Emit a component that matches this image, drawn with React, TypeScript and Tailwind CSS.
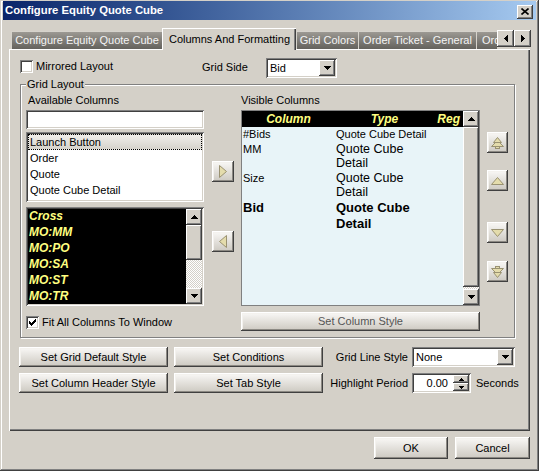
import React from "react";

const raised =
  "shadow-[inset_-1px_-1px_#404040,inset_1px_1px_#ffffff,inset_-2px_-2px_#808080,inset_2px_2px_#d4d0c8]";
const sunken =
  "shadow-[inset_1px_1px_#808080,inset_-1px_-1px_#ffffff,inset_2px_2px_#404040,inset_-2px_-2px_#d4d0c8]";
const btn =
  "bg-linear-to-b from-[#fbfaf8] to-[#cbc7bf] shadow-[inset_-1px_-1px_#404040,inset_1px_1px_#ffffff,inset_-2px_-2px_#8c8983,inset_2px_2px_#f4f2ee]";

function Btn({ className = "", children }: { className?: string; children?: React.ReactNode }) {
  return <div className={`${btn} flex items-center justify-center shrink-0 ${className}`}>{children}</div>;
}

function Tri({ dir }: { dir: "up" | "down" | "left" | "right" }) {
  if (dir === "up")
    return (
      <svg width="7" height="4" shapeRendering="crispEdges">
        <path d="M3 0h1v1h1v1h1v1h1v1H0V3h1V2h1V1h1z" fill="#000" />
      </svg>
    );
  if (dir === "down")
    return (
      <svg width="7" height="4" shapeRendering="crispEdges">
        <path d="M0 0h7v1H6v1H5v1H4v1H3V3H2V2H1V1H0z" fill="#000" />
      </svg>
    );
  if (dir === "left")
    return (
      <svg width="4" height="7" shapeRendering="crispEdges">
        <path d="M3 0h1v7H3V6H2V5H1V4H0V3h1V2h1V1h1z" fill="#000" />
      </svg>
    );
  return (
    <svg width="4" height="7" shapeRendering="crispEdges">
      <path d="M0 0h1v1h1v1h1v1h1v1H3v1H2v1H1v1H0z" fill="#000" />
    </svg>
  );
}

function ScrollBtn({ dir }: { dir: "up" | "down" }) {
  return (
    <div className={`w-[16px] h-[16px] shrink-0 bg-[#d4d0c8] ${raised} flex items-center justify-center`}>
      <Tri dir={dir} />
    </div>
  );
}

function Khaki({ kind }: { kind: "right" | "left" | "up" | "down" | "up2" | "down2" }) {
  const f = "#e4dcac";
  const s = "#9a9272";
  if (kind === "right")
    return (
      <svg width="8" height="13">
        <path d="M0.5 0.5L7.5 6.5L0.5 12.5Z" fill={f} stroke={s} />
      </svg>
    );
  if (kind === "left")
    return (
      <svg width="8" height="13">
        <path d="M7.5 0.5L0.5 6.5L7.5 12.5Z" fill={f} stroke={s} />
      </svg>
    );
  if (kind === "up")
    return (
      <svg width="13" height="8">
        <path d="M0.5 7.5L6.5 0.5L12.5 7.5Z" fill={f} stroke={s} />
      </svg>
    );
  if (kind === "down")
    return (
      <svg width="13" height="8">
        <path d="M0.5 0.5L6.5 7.5L12.5 0.5Z" fill={f} stroke={s} />
      </svg>
    );
  if (kind === "up2")
    return (
      <svg width="13" height="12">
        <rect x="4.5" y="8.5" width="4" height="3" fill={f} stroke={s} />
        <path d="M0.5 9.5L6.5 3.5L12.5 9.5Z" fill={f} stroke={s} />
        <path d="M2.5 5.5L6.5 0.5L10.5 5.5Z" fill={f} stroke={s} />
      </svg>
    );
  return (
    <svg width="13" height="12">
      <rect x="4.5" y="0.5" width="4" height="3" fill={f} stroke={s} />
      <path d="M0.5 2.5L6.5 8.5L12.5 2.5Z" fill={f} stroke={s} />
      <path d="M2.5 6.5L6.5 11.5L10.5 6.5Z" fill={f} stroke={s} />
    </svg>
  );
}

function Check({ checked = false }: { checked?: boolean }) {
  return (
    <div className={`w-[13px] h-[13px] shrink-0 bg-white ${sunken} flex items-center justify-center`}>
      {checked && (
        <svg width="7" height="7" shapeRendering="crispEdges">
          <path d="M6 0h1v3H6v1H5v1H4v1H3v1H2V6H1V5H0V2h1v1h1v1h1V3h1V2h1V1h1z" fill="#000" />
        </svg>
      )}
    </div>
  );
}

function Dropdown({ className = "", value }: { className?: string; value: string }) {
  return (
    <div className={`bg-white ${sunken} flex items-center p-[2px] shrink-0 ${className}`}>
      <span className="flex-1 pl-[2px]">{value}</span>
      <div className={`w-[16px] h-[16px] bg-[#d4d0c8] ${raised} flex items-center justify-center`}>
        <Tri dir="down" />
      </div>
    </div>
  );
}

function InTab({ className = "", children }: { className?: string; children: React.ReactNode }) {
  return (
    <div
      className={`h-[18px] mb-[1px] shrink-0 bg-linear-to-b from-[#9c9993] to-[#64625d] text-[#f4f4f4] border-l border-t border-[#d6d3cc] flex items-center whitespace-nowrap ${className}`}
    >
      {children}
    </div>
  );
}

export default function App() {
  return (
    <div className="w-[539px] h-[471px] bg-[#d4d0c8] flex flex-col px-[3px] pt-[1px] font-['Liberation_Sans',Arial,sans-serif] text-[11px] leading-[13px] text-black overflow-hidden shadow-[inset_-1px_-1px_#404040,inset_1px_1px_#d4d0c8,inset_-2px_-2px_#808080,inset_2px_2px_#ffffff]">
      {/* Title bar */}
      <div className="h-[19px] shrink-0 flex items-center justify-between pl-[2px] pr-[3px] bg-linear-to-r from-[#0a246a] to-[#a6caf0]">
        <span className="text-white font-bold text-[11.3px]">Configure Equity Quote Cube</span>
        <div className={`w-[16px] h-[14px] mt-[2px] bg-[#d4d0c8] ${raised} flex items-center justify-center`}>
          <svg width="8" height="7">
            <path d="M0.5 0.5L7.5 6.5M7.5 0.5L0.5 6.5" stroke="#000" strokeWidth="1.6" />
          </svg>
        </div>
      </div>

      {/* Tabs */}
      <div className="mt-[8px] ml-[6px] h-[22px] shrink-0 flex relative z-10">
        <div className="w-[488px] h-[22px] overflow-hidden flex items-end pl-[2px]">
          <InTab className="w-[151px] justify-center">Configure Equity Quote Cube</InTab>
          <div className="w-[134px] h-[22px] shrink-0 bg-[#d4d0c8] border-l border-t border-white shadow-[inset_-1px_0_#404040,inset_-2px_0_#808080] flex items-center justify-center whitespace-nowrap">
            Columns And Formatting
          </div>
          <InTab className="w-[62px] justify-center">Grid Colors</InTab>
          <InTab className="w-[118px] justify-center">Order Ticket - General</InTab>
          <InTab className="w-[40px] pl-[5px]">Ord</InTab>
        </div>
        <div className="flex mt-[2px] self-start">
          <div className={`w-[17px] h-[17px] bg-[#d4d0c8] ${raised} flex items-center justify-center`}>
            <Tri dir="left" />
          </div>
          <div className={`w-[17px] h-[17px] bg-[#d4d0c8] ${raised} flex items-center justify-center`}>
            <Tri dir="right" />
          </div>
        </div>
      </div>

      {/* Panel */}
      <div className="-mt-[1px] ml-[6px] w-[521px] h-[382px] shrink-0 flex flex-col shadow-[inset_1px_1px_#ffffff,inset_-1px_-1px_#404040,inset_-2px_-2px_#808080]">
        {/* Row 1 */}
        <div className="flex pt-[9px] pl-[11px] h-[29px]">
          <div className="w-[182px] flex items-start pt-[2px]">
            <Check />
            <span className="ml-[3px]">Mirrored Layout</span>
          </div>
          <div className="w-[64px] pt-[3px]">Grid Side</div>
          <Dropdown className="w-[71px] h-[20px]" value="Bid" />
        </div>

        {/* Group */}
        <div className="mt-[6px] ml-[11px] w-[495px] h-[254px] shrink-0 relative border border-[#808080] shadow-[inset_1px_1px_#ffffff,1px_1px_#ffffff] flex pt-[9px] pl-[5px]">
          <div className="absolute left-[5px] -top-[7px] bg-[#d4d0c8] px-[1px]">Grid Layout</div>

          {/* Available */}
          <div className="w-[178px] flex flex-col">
            <div className="h-[13px] pl-[2px]">Available Columns</div>
            <div className={`mt-[3px] h-[19px] bg-white ${sunken}`} />
            <div className={`mt-[3px] h-[70px] bg-white ${sunken} p-[2px] flex flex-col`}>
              <div className="h-[16px] flex items-center pl-[1px] border border-dotted border-black bg-linear-to-b from-[#f0eeea] to-[#d6d3cc]">
                Launch Button
              </div>
              <div className="h-[16px] flex items-center pl-[2px]">Order</div>
              <div className="h-[16px] flex items-center pl-[2px]">Quote</div>
              <div className="h-[16px] flex items-center pl-[2px]">Quote Cube Detail</div>
            </div>
            <div className={`mt-[5px] h-[99px] bg-black ${sunken} p-[2px] flex`}>
              <div className="flex-1 flex flex-col text-[#ffff80] font-bold italic text-[12px]">
                {["Cross", "MO:MM", "MO:PO", "MO:SA", "MO:ST", "MO:TR"].map((t) => (
                  <div key={t} className="h-[16px] flex items-center pl-[1px]">
                    {t}
                  </div>
                ))}
              </div>
              <div className="w-[16px] flex flex-col">
                <ScrollBtn dir="up" />
                <div className={`h-[35px] bg-[#d4d0c8] ${raised}`} />
                <div className="flex-1 bg-[image:repeating-conic-gradient(#ffffff_0%_25%,#d4d0c8_0%_50%)] bg-[length:2px_2px]" />
                <ScrollBtn dir="down" />
              </div>
            </div>
            <div className="mt-[10px] flex items-center">
              <Check checked />
              <span className="ml-[3px]">Fit All Columns To Window</span>
            </div>
          </div>

          {/* Middle arrows */}
          <div className="ml-[8px] w-[22px] flex flex-col">
            <Btn className="mt-[67px] h-[21px]">
              <Khaki kind="right" />
            </Btn>
            <Btn className="mt-[49px] h-[21px]">
              <Khaki kind="left" />
            </Btn>
          </div>

          {/* Visible */}
          <div className="ml-[7px] w-[239px] flex flex-col">
            <div className="h-[13px]">Visible Columns</div>
            <div className="mt-[3px] h-[196px] border border-[#808080] flex bg-[#e8f4f8]">
              <div className="flex-1 flex flex-col">
                <div className="h-[16px] bg-black flex items-center text-[#ffff80] font-bold italic text-[12px]">
                  <div className="w-[93px] text-center">Column</div>
                  <div className="w-[99px] text-center">Type</div>
                  <div className="flex-1 text-right pr-[3px]">Reg</div>
                </div>
                <div className="h-[15px] flex items-center">
                  <div className="w-[93px] pl-[1px]">#Bids</div>
                  <div className="w-[99px] pl-[1px]">Quote Cube Detail</div>
                </div>
                <div className="h-[29px] flex leading-[14px]">
                  <div className="w-[93px] pl-[1px]">MM</div>
                  <div className="w-[99px] pl-[1px] text-[12.5px]">
                    Quote Cube
                    <br />
                    Detail
                  </div>
                </div>
                <div className="h-[29px] flex leading-[14px]">
                  <div className="w-[93px] pl-[1px]">Size</div>
                  <div className="w-[99px] pl-[1px] text-[12.5px]">
                    Quote Cube
                    <br />
                    Detail
                  </div>
                </div>
                <div className="h-[32px] flex leading-[16px] font-bold text-[13px]">
                  <div className="w-[93px] pl-[1px]">Bid</div>
                  <div className="w-[99px] pl-[1px]">
                    Quote Cube
                    <br />
                    Detail
                  </div>
                </div>
              </div>
              <div className="w-[16px] flex flex-col">
                <ScrollBtn dir="up" />
                <div className={`flex-1 bg-[#d4d0c8] ${raised}`} />
                <div className="h-[2px] bg-[image:repeating-conic-gradient(#ffffff_0%_25%,#d4d0c8_0%_50%)] bg-[length:2px_2px]" />
                <ScrollBtn dir="down" />
              </div>
            </div>
            <Btn className="mt-[6px] h-[19px] text-[#555555]">Set Column Style</Btn>
          </div>

          {/* Right arrows */}
          <div className="ml-[7px] w-[21px] flex flex-col">
            <Btn className="mt-[38px] h-[21px]">
              <Khaki kind="up2" />
            </Btn>
            <Btn className="mt-[17px] h-[21px]">
              <Khaki kind="up" />
            </Btn>
            <Btn className="mt-[31px] h-[21px]">
              <Khaki kind="down" />
            </Btn>
            <Btn className="mt-[18px] h-[21px]">
              <Khaki kind="down2" />
            </Btn>
          </div>
        </div>

        {/* Bottom rows */}
        <div className="mt-[9px] pl-[10px] h-[20px] flex items-center">
          <Btn className="w-[149px] h-[20px]">Set Grid Default Style</Btn>
          <Btn className="ml-[6px] w-[149px] h-[20px]">Set Conditions</Btn>
          <div className="w-[85px] text-right">Grid Line Style</div>
          <Dropdown className="ml-[4px] w-[103px] h-[20px]" value="None" />
        </div>
        <div className="mt-[6px] pl-[10px] h-[20px] flex items-center">
          <Btn className="w-[149px] h-[20px]">Set Column Header Style</Btn>
          <Btn className="ml-[6px] w-[149px] h-[20px]">Set Tab Style</Btn>
          <div className="w-[85px] text-right">Highlight Period</div>
          <div className={`ml-[4px] w-[59px] h-[20px] bg-white ${sunken} flex p-[2px]`}>
            <div className="flex-1 text-right pr-[5px] self-center">0.00</div>
            <div className="w-[16px] flex flex-col">
              <div className={`h-[8px] bg-[#d4d0c8] ${raised} flex items-center justify-center`}>
                <svg width="5" height="3" shapeRendering="crispEdges">
                  <path d="M2 0h1v1h1v1h1v1H0V2h1V1h1z" fill="#000" />
                </svg>
              </div>
              <div className={`h-[8px] bg-[#d4d0c8] ${raised} flex items-center justify-center`}>
                <svg width="5" height="3" shapeRendering="crispEdges">
                  <path d="M0 0h5v1H4v1H3v1H2V2H1V1H0z" fill="#000" />
                </svg>
              </div>
            </div>
          </div>
          <span className="ml-[5px]">Seconds</span>
        </div>
      </div>

      {/* OK / Cancel */}
      <div className="mt-[6px] pr-[6px] flex justify-end">
        <Btn className="w-[74px] h-[22px]">OK</Btn>
        <Btn className="ml-[7px] w-[75px] h-[22px]">Cancel</Btn>
      </div>
    </div>
  );
}
